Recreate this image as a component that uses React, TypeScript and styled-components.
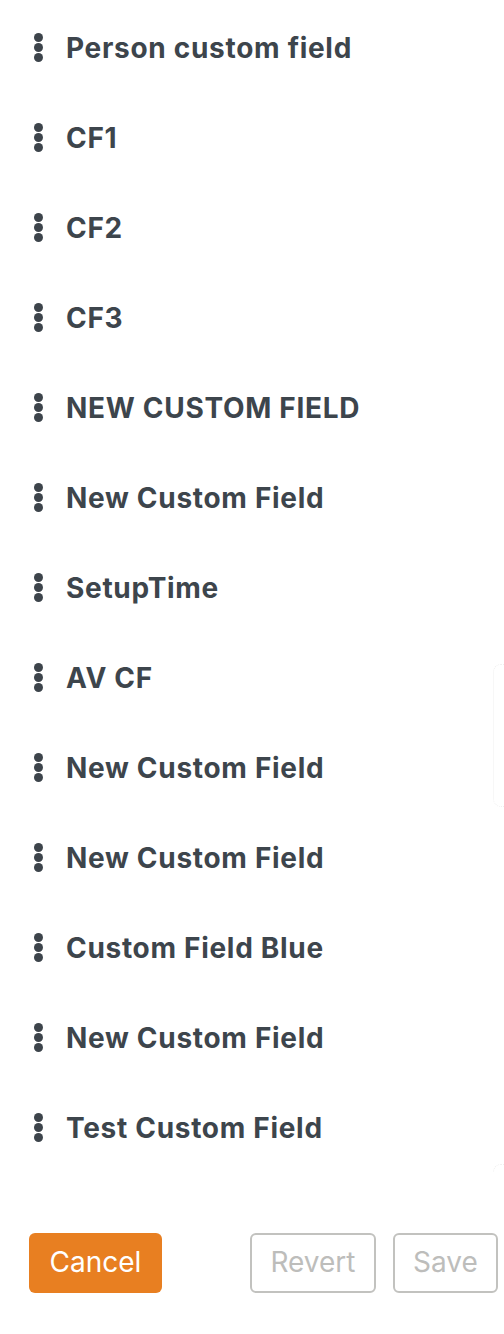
import styled, { createGlobalStyle } from "styled-components";

const GlobalStyle = createGlobalStyle`
  html, body {
    margin: 0;
    padding: 0;
    background: #ffffff;
  }
  body {
    font-family: "Inter", "Open Sans", sans-serif;
  }
`;

const Page = styled.div`
  width: 504px;
  height: 1334px;
  display: flex;
  flex-direction: column;
  overflow: hidden;
`;

const Body = styled.div`
  display: flex;
  align-items: flex-start;
  height: 1172px;
  overflow: hidden;
`;

const FieldList = styled.ul`
  flex: 1;
  list-style: none;
  margin: 0;
  padding: 2px 0 0 0;
`;

const FieldRow = styled.li`
  height: 90px;
  display: flex;
  align-items: center;
  padding-left: 34px;
  gap: 22px;
`;

const Handle = styled.span`
  display: flex;
  flex-direction: column;
  gap: 1px;
  width: 10px;
`;

const Dot = styled.span`
  width: 9px;
  height: 9px;
  border-radius: 50%;
  background: #3d444b;
`;

const FieldName = styled.span`
  font-size: 28px;
  font-weight: 700;
  letter-spacing: 0.7px;
  color: #3d454c;
  white-space: nowrap;
  padding-top: 2px;
`;

const Sliver = styled.div`
  width: 11px;
  display: flex;
  flex-direction: column;
`;

const GhostBox = styled.div<{ $top: number; $height: number }>`
  margin-top: ${(p) => p.$top}px;
  height: ${(p) => p.$height}px;
  border: 1px dotted #f0f0f0;
  border-right: none;
  border-radius: 8px 0 0 8px;
`;

const Footer = styled.div`
  display: flex;
  align-items: center;
  padding: 61px 6px 0 29px;
`;

const Button = styled.button<{ $primary?: boolean }>`
  height: 60px;
  box-sizing: border-box;
  border-radius: 6px;
  font-family: "Inter", "Open Sans", sans-serif;
  font-size: 28px;
  font-weight: 400;
  padding: 0 0 2px 0;
  cursor: pointer;
  background: ${(p) => (p.$primary ? "#e87f21" : "#ffffff")};
  color: ${(p) => (p.$primary ? "#ffffff" : "#bdbdbb")};
  border: ${(p) => (p.$primary ? "none" : "2px solid #c2c2bf")};
`;

const CancelButton = styled(Button)`
  width: 133px;
`;

const ActionGroup = styled.div`
  margin-left: auto;
  display: flex;
  gap: 17px;
`;

const RevertButton = styled(Button)`
  width: 126px;
`;

const SaveButton = styled(Button)`
  width: 105px;
`;

const fields = [
  "Person custom field",
  "CF1",
  "CF2",
  "CF3",
  "NEW CUSTOM FIELD",
  "New Custom Field",
  "SetupTime",
  "AV CF",
  "New Custom Field",
  "New Custom Field",
  "Custom Field Blue",
  "New Custom Field",
  "Test Custom Field",
];

function DragHandle() {
  return (
    <Handle>
      <Dot />
      <Dot />
      <Dot />
    </Handle>
  );
}

export default function App() {
  return (
    <>
      <GlobalStyle />
      <Page>
        <Body>
          <FieldList>
            {fields.map((name, i) => (
              <FieldRow key={i}>
                <DragHandle />
                <FieldName>{name}</FieldName>
              </FieldRow>
            ))}
          </FieldList>
          <Sliver>
            <GhostBox $top={664} $height={141} />
            <GhostBox $top={357} $height={100} />
          </Sliver>
        </Body>
        <Footer>
          <CancelButton $primary>Cancel</CancelButton>
          <ActionGroup>
            <RevertButton disabled>Revert</RevertButton>
            <SaveButton disabled>Save</SaveButton>
          </ActionGroup>
        </Footer>
      </Page>
    </>
  );
}
